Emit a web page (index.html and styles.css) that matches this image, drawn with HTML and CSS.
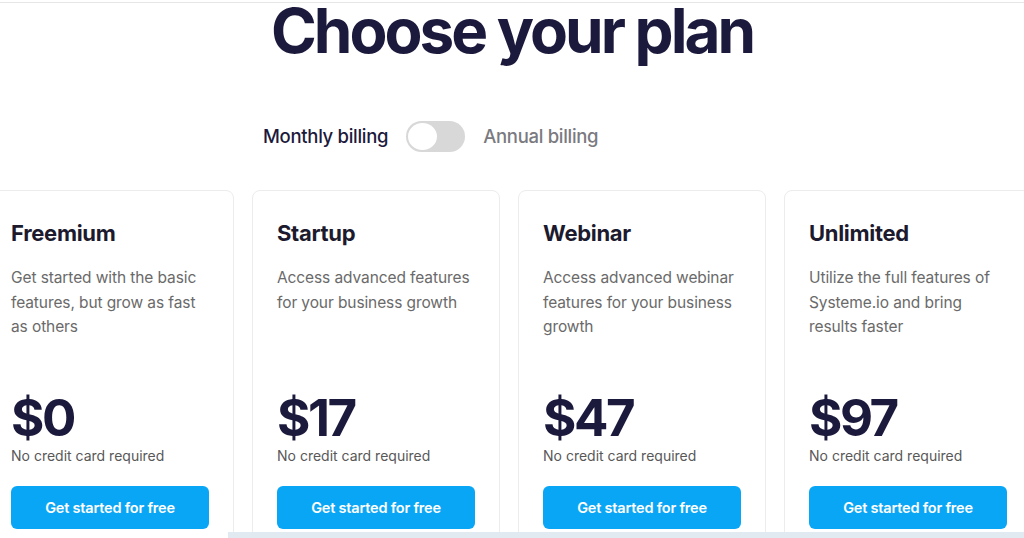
FILE: index.html
```html
<!DOCTYPE html>
<html lang="en">
<head>
<meta charset="utf-8">
<title>Choose your plan</title>
<link rel="stylesheet" href="styles.css">
</head>
<body>
<div class="topline"></div>
<main class="page">
  <h1 class="title">Choose your plan</h1>
  <div class="billing">
    <span class="billing-label active">Monthly billing</span>
    <span class="switch"><span class="knob"></span></span>
    <span class="billing-label">Annual billing</span>
  </div>
  <section class="cards">
    <article class="card">
      <h2 class="card-title">Freemium</h2>
      <p class="card-desc">Get started with the basic features, but grow as fast as others</p>
      <div class="price">$0</div>
      <p class="note">No credit card required</p>
      <a class="btn" href="#">Get started for free</a>
    </article>
    <article class="card">
      <h2 class="card-title">Startup</h2>
      <p class="card-desc">Access advanced features for your business growth</p>
      <div class="price">$17</div>
      <p class="note">No credit card required</p>
      <a class="btn" href="#">Get started for free</a>
    </article>
    <article class="card">
      <h2 class="card-title">Webinar</h2>
      <p class="card-desc">Access advanced webinar features for your business growth</p>
      <div class="price">$47</div>
      <p class="note">No credit card required</p>
      <a class="btn" href="#">Get started for free</a>
    </article>
    <article class="card">
      <h2 class="card-title">Unlimited</h2>
      <p class="card-desc">Utilize the full features of Systeme.io and bring results faster</p>
      <div class="price">$97</div>
      <p class="note">No credit card required</p>
      <a class="btn" href="#">Get started for free</a>
    </article>
  </section>
</main>
<div class="taskbar"></div>
</body>
</html>
```
FILE: styles.css
```css
* { box-sizing: border-box; }
html, body { margin: 0; padding: 0; }
body {
  width: 1024px;
  height: 538px;
  overflow: hidden;
  background: #fff;
  font-family: Inter, "Noto Sans", sans-serif;
  color: #1d1b3d;
}
.topline {
  height: 4px;
  border-bottom: 1px solid #e6e6e6;
  margin-top: -1px;
}
.page {
  display: flex;
  flex-direction: column;
  align-items: center;
}
.title {
  margin: 2px 0 0;
  font-size: 62px;
  line-height: 52px;
  font-weight: 700;
  letter-spacing: -3px;
  color: #1c1a3c;
}
.billing {
  display: flex;
  align-items: center;
  gap: 18px;
  margin-top: 63px;
  height: 32px;
  align-self: flex-start;
  margin-left: 263px;
}
.billing-label {
  font-size: 18.5px;
  font-weight: 500;
  color: #7a7a80;
  letter-spacing: -0.3px;
}
.billing-label.active { color: #1c1a3c; }
.switch {
  width: 59px;
  height: 31px;
  border-radius: 16px;
  background: #d8d8d8;
  padding: 2px;
  display: flex;
}
.knob {
  width: 29px;
  height: 27px;
  border-radius: 50%;
  background: #fff;
}
.cards {
  display: flex;
  gap: 18px;
  margin-top: 38px;
  align-self: flex-start;
  margin-left: -14px;
}
.card {
  flex: 0 0 248px;
  width: 248px;
  height: 380px;
  border: 1px solid #ececec;
  border-radius: 8px;
  padding: 27px 24px 0 24px;
  display: flex;
  flex-direction: column;
}
.card-title {
  margin: 0;
  font-size: 22px;
  line-height: 30px;
  font-weight: 700;
  letter-spacing: -0.3px;
  color: #1c1a2e;
}
.card-desc {
  margin: 18px 0 0;
  min-height: 74px;
  font-size: 15.5px;
  line-height: 24.5px;
  color: #6a6a6a;
  letter-spacing: -0.1px;
}
.price {
  margin-top: 50px;
  font-size: 51px;
  line-height: 56px;
  font-weight: 700;
  letter-spacing: -2.5px;
  color: #1c1a3c;
}
.note {
  margin: 0;
  font-size: 14px;
  line-height: 20px;
  color: #585858;
}
.btn {
  margin-top: 20px;
  width: 198px;
  height: 43px;
  border-radius: 6px;
  background: #0aa6f6;
  color: #fff;
  font-size: 14.5px;
  font-weight: 600;
  text-decoration: none;
  display: flex;
  align-items: center;
  justify-content: center;
  letter-spacing: -0.2px;
}
.taskbar {
  position: fixed;
  left: 228px;
  right: 0;
  bottom: 0;
  height: 6px;
  background: #e1eaf0;
}
```
